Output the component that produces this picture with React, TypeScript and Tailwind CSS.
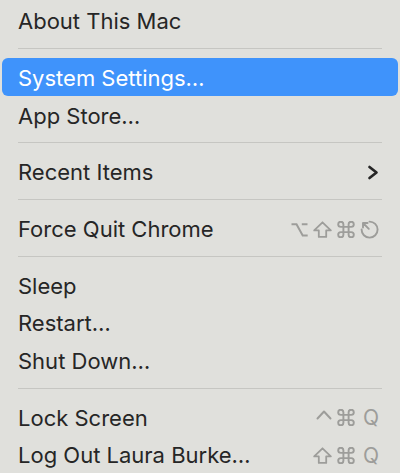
const Opt = () => (
  <svg width="17" height="15" viewBox="0 0 17 15" fill="none" stroke="currentColor" strokeWidth="2" strokeLinecap="butt">
    <path d="M0.5 2.2h5l6.2 11.2h5M10.8 2.2h5.7" />
  </svg>
);

const Shift = () => (
  <svg width="19" height="17" viewBox="0 0 19 17" fill="none" stroke="currentColor" strokeWidth="1.8" strokeLinejoin="round">
    <path d="M9.5 1.3 17.8 9.4H13.2V15.9H5.8V9.4H1.2Z" />
  </svg>
);

const Cmd = () => (
  <svg width="18" height="17" viewBox="2.2 2.2 19.6 19.6" fill="none" stroke="currentColor" strokeWidth="2.2" strokeLinecap="round" strokeLinejoin="round">
    <path d="M15 6v12a3 3 0 1 0 3-3H6a3 3 0 1 0 3 3V6a3 3 0 1 0-3 3h12a3 3 0 1 0-3-3" />
  </svg>
);

const Esc = () => (
  <svg width="19" height="19" viewBox="0 0 19 19" fill="none" stroke="currentColor" strokeWidth="1.9" strokeLinecap="round" strokeLinejoin="round">
    <path d="M9.5 1.6A8 8 0 1 1 1.6 9.5" />
    <path d="M3 3 8.8 8.8M3 3H7.6M3 3V7.6" />
  </svg>
);

const Ctrl = () => (
  <svg width="16" height="17" viewBox="0 0 16 17" fill="none" stroke="currentColor" strokeWidth="2" strokeLinecap="round" strokeLinejoin="round">
    <path d="M1.5 9.5 8 2.5l6.5 7" />
  </svg>
);

const Chevron = () => (
  <svg width="12" height="15" viewBox="0 0 12 15" fill="none" stroke="#262626" strokeWidth="2.7" strokeLinecap="round" strokeLinejoin="round">
    <path d="M2.5 2 9.5 7.5 2.5 13" />
  </svg>
);

const Q = () => <span className="ml-[3px] text-[21px] leading-none">Q</span>;

function Row({
  label,
  active,
  right,
}: {
  label: string;
  active?: boolean;
  right?: React.ReactNode;
}) {
  return (
    <div
      className={
        active
          ? "mx-[2px] flex h-[37.5px] items-center justify-between rounded-[6px] bg-[#3f93fb] pl-4 pr-[19px] text-white"
          : "mx-[2px] flex h-[37.5px] items-center justify-between pl-4 pr-[19px] text-[#262626]"
      }
    >
      <span className="pt-[2px]">{label}</span>
      {right && <span className="flex items-center gap-[5px] pt-[2px] text-[#9d9d9a]">{right}</span>}
    </div>
  );
}

const Sep = () => (
  <div className="flex h-[19.3px] items-center px-[18px]">
    <div className="h-px w-full bg-[#c6c6c2]" />
  </div>
);

export default function App() {
  return (
    <div
      className="h-[473px] w-[400px] overflow-hidden bg-[#e0e0dc] pt-[1.5px] text-[22px] leading-none"
      style={{ fontFamily: "Inter, 'Noto Sans', sans-serif" }}
    >
      <Row label="About This Mac" />
      <Sep />
      <Row label="System Settings…" active />
      <Row label="App Store…" />
      <Sep />
      <Row label="Recent Items" right={<Chevron />} />
      <Sep />
      <Row
        label="Force Quit Chrome"
        right={
          <>
            <Opt />
            <Shift />
            <Cmd />
            <Esc />
          </>
        }
      />
      <Sep />
      <Row label="Sleep" />
      <Row label="Restart…" />
      <Row label="Shut Down…" />
      <Sep />
      <Row
        label="Lock Screen"
        right={
          <>
            <Ctrl />
            <Cmd />
            <Q />
          </>
        }
      />
      <Row
        label="Log Out Laura Burke…"
        right={
          <>
            <Shift />
            <Cmd />
            <Q />
          </>
        }
      />
    </div>
  );
}
